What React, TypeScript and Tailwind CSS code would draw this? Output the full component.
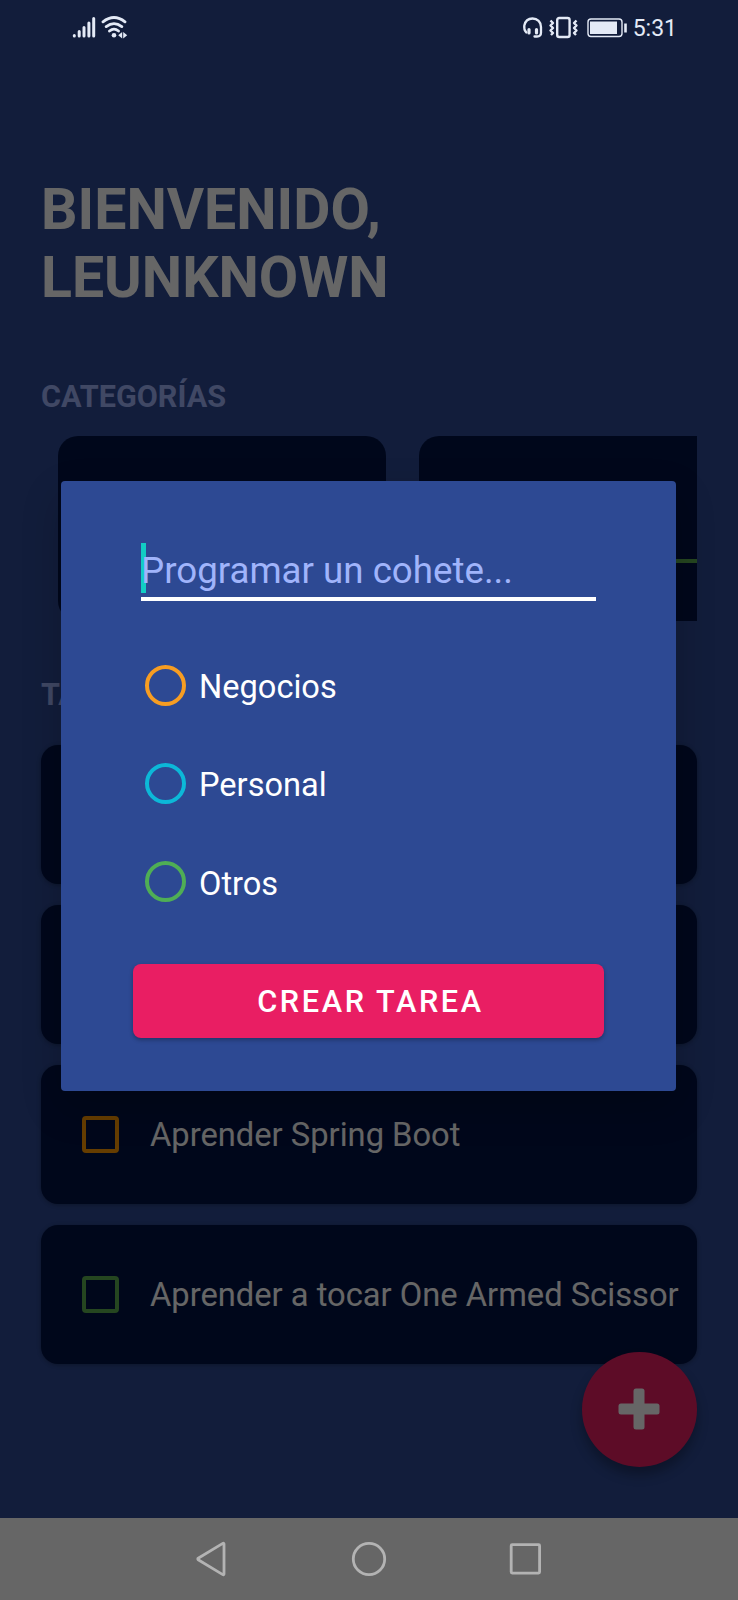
const categories = [
  { name: 'Negocios', ring: 'border-[#f79d22]' },
  { name: 'Personal', ring: 'border-[#0cb8d8]' },
  { name: 'Otros', ring: 'border-[#4fae55]' },
];

const tasks = [
  { title: '', box: '' },
  { title: '', box: '' },
  { title: 'Aprender Spring Boot', box: 'border-[#ff9800]' },
  { title: 'Aprender a tocar One Armed Scissor', box: 'border-[#5cae50]' },
];

function StatusBar() {
  return (
    <div className="relative z-20 flex h-[56px] items-center justify-between pl-[72px] pr-[61px] text-[#e4eaf6]">
      <svg width="56" height="24" viewBox="0 0 56 24" fill="none" stroke="currentColor">
        <g strokeWidth="3" strokeLinecap="round">
          <path d="M2.3 19.6v.5M7.2 15.500v4.500M12 11.500v8.500M16.900 7v13M21.700 2.500v17.500" />
        </g>
        <g strokeWidth="2.800" strokeLinecap="round">
          <path d="M31 5.800C38 .3 46 .3 53 5.800M34.200 10.600C39.500 6.500 44.500 6.500 49.800 10.600M37.500 15C40.500 12.500 43.500 12.500 46.500 15" />
        </g>
        <circle cx="42" cy="19.200" r="2.300" fill="currentColor" stroke="none" />
        <path d="M50.200 16v6.500l-4-3.200zM51.200 16v6.500l4-3.200z" fill="currentColor" stroke="none" />
      </svg>
      <div className="flex items-center">
        <svg width="106" height="24" viewBox="0 0 106 24" fill="none" stroke="currentColor">
          <path d="M4.300 16.500C2.500 14.500 1.900 12 2.300 9.500 3.300 5 6.500 2.500 10.500 2.500c5 0 8.500 3.500 8.500 8.500v5.500c0 2.500-1.500 4-4 4h-2.500" strokeWidth="2.300" strokeLinecap="round" />
          <path d="M7 13.500v3.500M14.500 13.500v3.500" strokeWidth="3.200" strokeLinecap="round" />
          <rect x="35.200" y="2" width="12.400" height="19" rx="2" strokeWidth="2.400" />
          <path d="M28.500 4.500l2.500 2.500-2.500 2.500 2.500 2.500-2.500 2.500 2.500 2.500-2 2M54.500 4.500l-2.500 2.500 2.500 2.500-2.500 2.500 2.500 2.500-2.500 2.500 2 2" strokeWidth="2.400" strokeLinejoin="round" />
          <rect x="66" y="3" width="34" height="17.500" rx="3" strokeWidth="1.400" />
          <rect x="68" y="5.500" width="27" height="12.500" fill="currentColor" stroke="none" />
          <path d="M103.500 7.500v9" strokeWidth="2.600" />
        </svg>
        <span className="ml-[5px] text-[23px] leading-none">5:31</span>
      </div>
    </div>
  );
}

function TaskCard({ title, box }: { title: string; box: string }) {
  return (
    <div className="flex h-[139px] shrink-0 items-center rounded-[17px] bg-[#021344] pl-[41px] shadow-[0_1px_4px_rgba(0,0,0,0.3)]">
      {title && (
        <>
          <span className={'size-[37px] rounded-[4px] border-4 ' + box} />
          <span className="ml-[31px] whitespace-nowrap pt-px text-[32.700px] leading-none text-white">{title}</span>
        </>
      )}
    </div>
  );
}

function NavBar() {
  return (
    <div className="h-[82px] shrink-0 bg-white">
      <div className="relative z-20 flex h-[80px] items-center justify-center text-[#b3b3b3]">
        <svg width="346" height="40" viewBox="0 0 346 40" fill="none" stroke="currentColor" strokeWidth="2.800" strokeLinejoin="round">
          <path d="M28 6v30a.8.800 0 0 1-1.200.600L2.200 21.800a1 1 0 0 1 0-1.600L26.800 5.400a.8.800 0 0 1 1.200.600z" />
          <circle cx="173" cy="21" r="15.700" />
          <rect x="315.200" y="6.700" width="28.400" height="28.400" rx="1" />
        </svg>
      </div>
    </div>
  );
}

function NewTaskDialog() {
  return (
    <div className="flex h-[610px] w-[615px] flex-col rounded-[4px] bg-[#2d4993] px-[72px] pt-[62px] text-white shadow-[0_16px_40px_rgba(0,0,0,0.2)]">
      <div className="mx-[8px] h-[58px] border-b-4 border-white">
        <div className="flex h-[50px] items-center border-l-[5px] border-[#12cdc4]">
          <span className="-ml-[5px] whitespace-nowrap pt-[7px] text-[36.700px] leading-none text-[#a0b4fb]">
            Programar un cohete...
          </span>
        </div>
      </div>
      <div className="mt-[35px] flex flex-col">
        {categories.map((c) => (
          <div key={c.name} className="flex h-[98.400px] items-center pl-[12px]">
            <span className={'size-[41px] rounded-full border-4 ' + c.ring} />
            <span className="ml-[13px] pt-[4px] text-[32.600px] leading-none">{c.name}</span>
          </div>
        ))}
      </div>
      <button className="mt-[33px] h-[74px] w-[471px] shrink-0 rounded-[8px] bg-[#e91e63] pl-[4px] pt-[3px] text-[30.700px] font-medium leading-none tracking-[2.600px] shadow-[0_2px_4px_rgba(0,0,0,0.3)]">
        CREAR TAREA
      </button>
    </div>
  );
}

export default function App() {
  return (
    <div className="relative flex h-[1600px] w-[738px] flex-col overflow-hidden bg-[#2d4993] font-['Roboto',sans-serif]">
      <StatusBar />
      <main className="flex flex-1 flex-col px-[41px] pt-[120px]">
        <h1 className="text-[57.200px] font-bold leading-[68px] text-white">
          BIENVENIDO,
          <br />
          LEUNKNOWN
        </h1>
        <h2 className="mt-[67px] text-[30.600px] font-bold leading-[36px] text-[#a0b4fb]">CATEGORÍAS</h2>
        <div className="mt-[21px] flex h-[185px] shrink-0 gap-[33px] overflow-hidden pl-[17px]">
          <div className="w-[328px] shrink-0 rounded-[20px] bg-[#021344]" />
          <div className="w-[328px] shrink-0 rounded-[20px] bg-[#021344] pt-[123px]">
            <div className="mx-[20px] h-[4px] bg-[#5cae50]" />
          </div>
        </div>
        <h2 className="mt-[56px] text-[30.600px] font-bold leading-[36px] text-[#a0b4fb]">TAREAS</h2>
        <div className="mt-[32px] flex flex-col gap-[21px]">
          {tasks.map((t, i) => (
            <TaskCard key={i} title={t.title} box={t.box} />
          ))}
        </div>
      </main>
      <button className="absolute bottom-[133px] right-[41px] flex size-[115px] items-center justify-center rounded-full bg-[#e91e63] pb-px pr-px shadow-[0_8px_12px_rgba(0,0,0,0.3)]">
        <svg width="42" height="42" viewBox="0 0 42 42" fill="#fff">
          <rect x="0.500" y="15.500" width="41" height="11" rx="2.500" />
          <rect x="15.500" y="0.500" width="11" height="41" rx="2.500" />
        </svg>
      </button>
      <NavBar />
      <div className="absolute inset-0 z-10 bg-black/60 pl-[61px] pt-[481px]">
        <NewTaskDialog />
      </div>
    </div>
  );
}
